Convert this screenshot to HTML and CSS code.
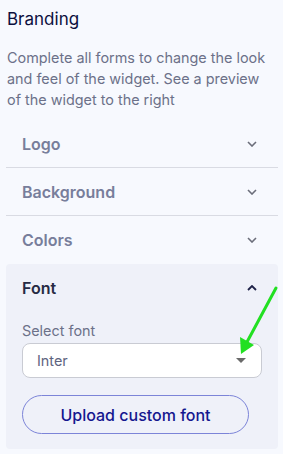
FILE: index.html
```html
<!DOCTYPE html>
<html>
<head>
<meta charset="utf-8">
<link rel="stylesheet" href="styles.css">
</head>
<body>
<div class="page">
  <h1 class="title">Branding</h1>
  <p class="desc">Complete all forms to change the look and feel of the widget. See a preview of the widget to the right</p>
  <div class="sections">
    <div class="row">
      <span class="row-label">Logo</span>
      <svg class="chev" width="10" height="6" viewBox="0 0 10 6"><path d="M1 1l4 4 4-4" fill="none" stroke="#6b6e7a" stroke-width="1.6"/></svg>
    </div>
    <div class="row">
      <span class="row-label">Background</span>
      <svg class="chev" width="10" height="6" viewBox="0 0 10 6"><path d="M1 1l4 4 4-4" fill="none" stroke="#6b6e7a" stroke-width="1.6"/></svg>
    </div>
    <div class="row last">
      <span class="row-label">Colors</span>
      <svg class="chev" width="10" height="6" viewBox="0 0 10 6"><path d="M1 1l4 4 4-4" fill="none" stroke="#6b6e7a" stroke-width="1.6"/></svg>
    </div>
    <div class="panel">
      <div class="panel-head">
        <span class="panel-label">Font</span>
        <svg class="chev" width="10" height="6" viewBox="0 0 10 6"><path d="M1 5l4-4 4 4" fill="none" stroke="#1e2248" stroke-width="1.8"/></svg>
      </div>
      <div class="field">
        <label class="field-label">Select font</label>
        <div class="select">
          <span>Inter</span>
          <svg width="10" height="5" viewBox="0 0 10 5"><path d="M0 0h10L5 5z" fill="#6a6a6a"/></svg>
        </div>
      </div>
      <button class="upload">Upload custom font</button>
    </div>
  </div>
</div>
<svg class="arrow" width="283" height="454" viewBox="0 0 283 454">
  <line x1="276" y1="288" x2="247" y2="342" stroke="#22e022" stroke-width="3" stroke-linecap="round"/>
  <path d="M241 354 L240 337 L254 345 Z" fill="#22e022"/>
</svg>
</body>
</html>
```
FILE: styles.css
```css
html, body {
  margin: 0;
  padding: 0;
  background: #f7f9fe;
}
body {
  font-family: Inter, "Noto Sans", sans-serif;
  width: 283px;
  height: 454px;
  overflow: hidden;
  position: relative;
}
.page {
  padding: 7px 5px 0 6px;
}
.title {
  margin: 0;
  font-size: 17px;
  font-weight: 400;
  color: #0c0f3d;
  line-height: 24px;
  padding-left: 1px;
}
.desc {
  margin: 16px 0 0 0;
  font-size: 14.4px;
  line-height: 21px;
  color: #6c7189;
  padding-left: 1px;
  width: 263px;
}
.sections {
  margin-top: 10px;
}
.row {
  height: 47px;
  border-bottom: 1px solid #d9dbe3;
  display: flex;
  align-items: center;
  justify-content: space-between;
  padding: 0 21px 0 16px;
}
.row.last {
  border-bottom: none;
  height: 48px;
}
.row-label {
  font-size: 16px;
  font-weight: 600;
  color: #787e9b;
}
.panel {
  background: #eff1f9;
  border-radius: 4px;
  padding: 0 16px 15px 16px;
}
.panel-head {
  height: 48px;
  display: flex;
  align-items: center;
  justify-content: space-between;
  padding-right: 5px;
}
.panel-label {
  font-size: 16px;
  font-weight: 600;
  color: #262a44;
}
.field {
  margin-top: 10px;
  display: flex;
  flex-direction: column;
}
.field-label {
  font-size: 14.4px;
  color: #6c7189;
  line-height: 18px;
}
.select {
  margin-top: 3px;
  height: 33px;
  background: #ffffff;
  border: 1px solid #c9cbd3;
  border-radius: 8px;
  display: flex;
  align-items: center;
  justify-content: space-between;
  padding: 0 15px 0 14px;
  font-size: 14.4px;
  color: #5e6480;
}
.upload {
  margin-top: 17px;
  width: 227px;
  height: 39px;
  border: 1px solid #7c84d8;
  border-radius: 20px;
  background: transparent;
  font-family: Inter, "Noto Sans", sans-serif;
  font-size: 16px;
  font-weight: 500;
  color: #15178f;
  display: block;
}
.arrow {
  position: absolute;
  left: 0;
  top: 0;
  pointer-events: none;
}
```
